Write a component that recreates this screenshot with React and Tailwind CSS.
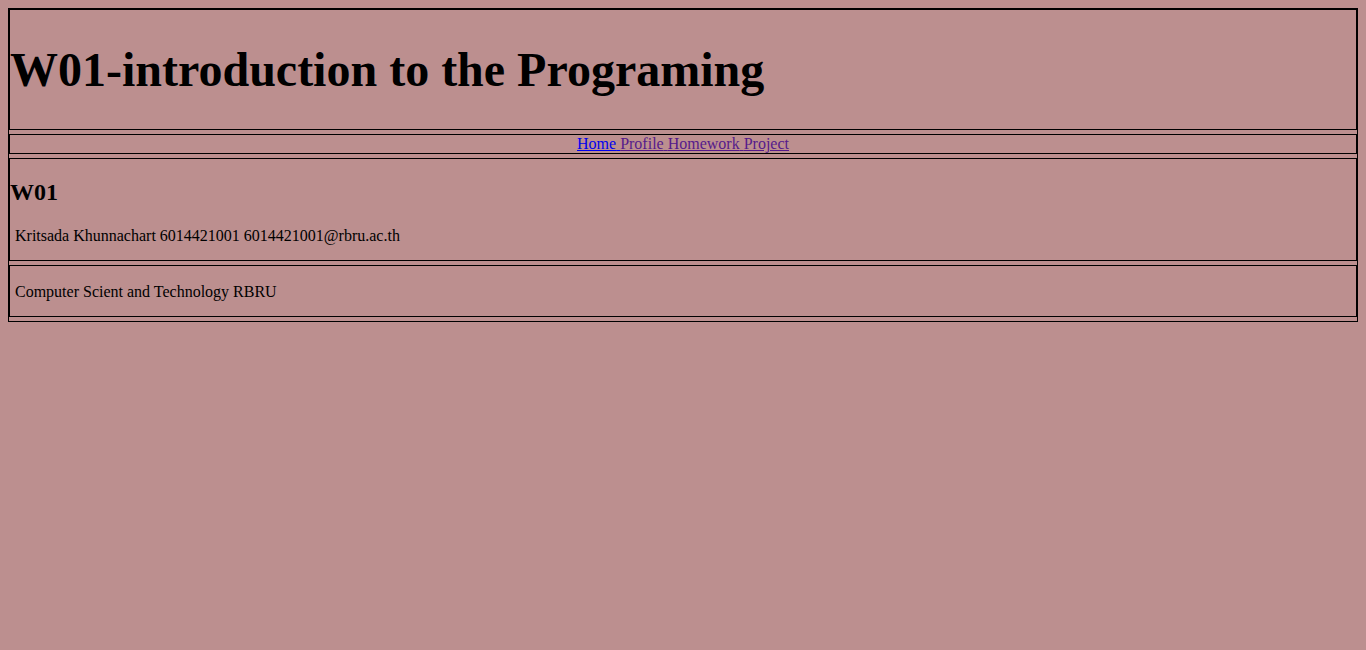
export default function App() {
  return (
    <div className="min-h-screen bg-[#bc8f8f] p-2 font-['Liberation_Serif',serif] text-black">
      <div className="flex flex-col gap-1 border border-black pb-1">
        {/* header */}
        <div className="flex h-[121px] items-center border border-black">
          <h1 className="text-[48px] font-bold leading-[55px]">
            W01-introduction to the Programing
          </h1>
        </div>

        {/* nav */}
        <div className="flex h-[20px] items-center justify-center border border-black text-[16px] leading-[18px]">
          <p>
            <a href="#" className="text-[#0000ee] underline">
              Home{" "}
            </a>
            <a href="#" className="text-[#551a8b] underline">
              Profile{" "}
            </a>
            <a href="#" className="text-[#551a8b] underline">
              Homework{" "}
            </a>
            <a href="#" className="text-[#551a8b] underline">
              Project
            </a>
          </p>
        </div>

        {/* profile */}
        <div className="flex h-[103px] flex-col border border-black">
          <h2 className="mt-[19px] text-[24px] font-bold leading-[28px]">W01</h2>
          <p className="mt-[21px] pl-[5px] text-[16px] leading-[18px]">
            Kritsada Khunnachart 6014421001 6014421001@rbru.ac.th
          </p>
        </div>

        {/* footer */}
        <div className="flex h-[52px] items-center border border-black pl-[5px] pt-[2px] text-[16px] leading-[18px]">
          Computer Scient and Technology RBRU
        </div>
      </div>
    </div>
  );
}
